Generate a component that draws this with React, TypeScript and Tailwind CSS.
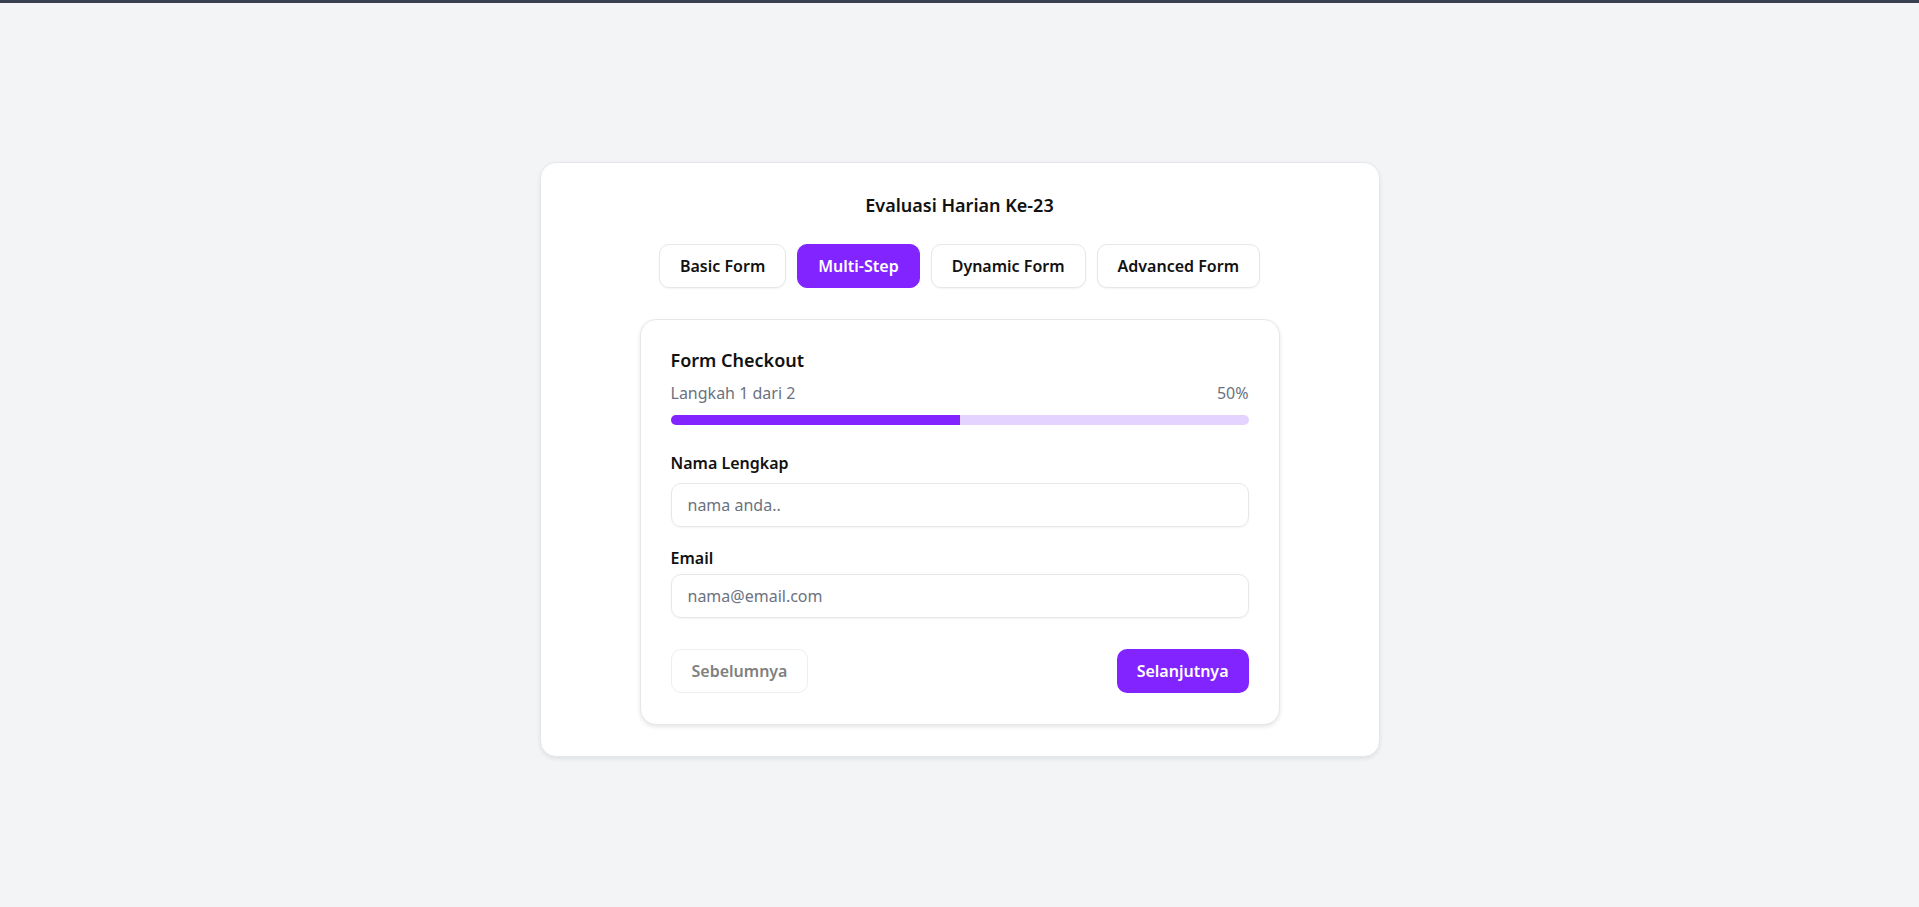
import React from "react";

const font = { fontFamily: '"Noto Sans", "Open Sans", sans-serif' };

export default function App() {
  const tabs = ["Basic Form", "Multi-Step", "Dynamic Form", "Advanced Form"];
  const active = "Multi-Step";
  const progress = 50;
  return (
    <div className="min-h-screen bg-[#f3f4f6] border-t-[3px] border-[#374151] text-[#111111]" style={font}>
      <div className="flex justify-center pt-[159px]">
        <div className="w-[840px] bg-white border border-[#e5e7eb] rounded-2xl shadow-[0_2px_4px_rgba(0,0,0,0.08)] px-[30px] pt-[30px] pb-[31px]">
          <h1 className="text-center text-lg font-semibold leading-6">Evaluasi Harian Ke-23</h1>
          <div className="mt-[27px] flex justify-center gap-[11px]">
            {tabs.map((t) => (
              <button
                key={t}
                className={
                  t === active
                    ? "h-11 px-5 rounded-[10px] border border-[#8224ff] bg-[#8224ff] text-white text-base font-semibold"
                    : "h-11 px-5 rounded-[10px] border border-[#e5e7eb] bg-white text-[#111111] text-base font-semibold shadow-[0_1px_2px_rgba(0,0,0,0.05)]"
                }
              >
                {t}
              </button>
            ))}
          </div>
          <div className="mt-[31px] mx-auto w-[640px] border border-[#e5e7eb] rounded-2xl bg-white shadow-[0_2px_4px_rgba(0,0,0,0.1)] px-[30px] pt-[29px] pb-[31px]">
            <h2 className="text-lg font-semibold leading-[22px]">Form Checkout</h2>
            <div className="mt-[10px] flex justify-between text-base leading-6 text-[#6b7280]">
              <span>Langkah 1 dari 2</span>
              <span>{progress}%</span>
            </div>
            <div className="mt-[10px] h-2.5 rounded-full bg-[#e5d3ff] overflow-hidden">
              <div className="h-full bg-[#8224ff]" style={{ width: `${progress}%` }} />
            </div>
            <div className="mt-[26px]">
              <label className="block text-base font-semibold leading-6">Nama Lengkap</label>
              <input
                className="mt-2 w-full h-11 rounded-[10px] border border-[#e5e7eb] px-4 text-base text-[#111111] placeholder:text-[#6b7280] outline-none shadow-[0_1px_2px_rgba(0,0,0,0.05)]"
                placeholder="nama anda.."
              />
            </div>
            <div className="mt-[19px]">
              <label className="block text-base font-semibold leading-6">Email</label>
              <input
                className="mt-1 w-full h-11 rounded-[10px] border border-[#e5e7eb] px-4 text-base text-[#111111] placeholder:text-[#6b7280] outline-none shadow-[0_1px_2px_rgba(0,0,0,0.05)]"
                placeholder="nama@email.com"
              />
            </div>
            <div className="mt-[31px] flex justify-between">
              <button className="h-11 px-5 rounded-[10px] border border-[#eeeeee] bg-white text-base font-semibold text-[#808080]">
                Sebelumnya
              </button>
              <button className="h-11 px-5 rounded-[10px] bg-[#8224ff] text-base font-semibold text-white">
                Selanjutnya
              </button>
            </div>
          </div>
        </div>
      </div>
    </div>
  );
}
